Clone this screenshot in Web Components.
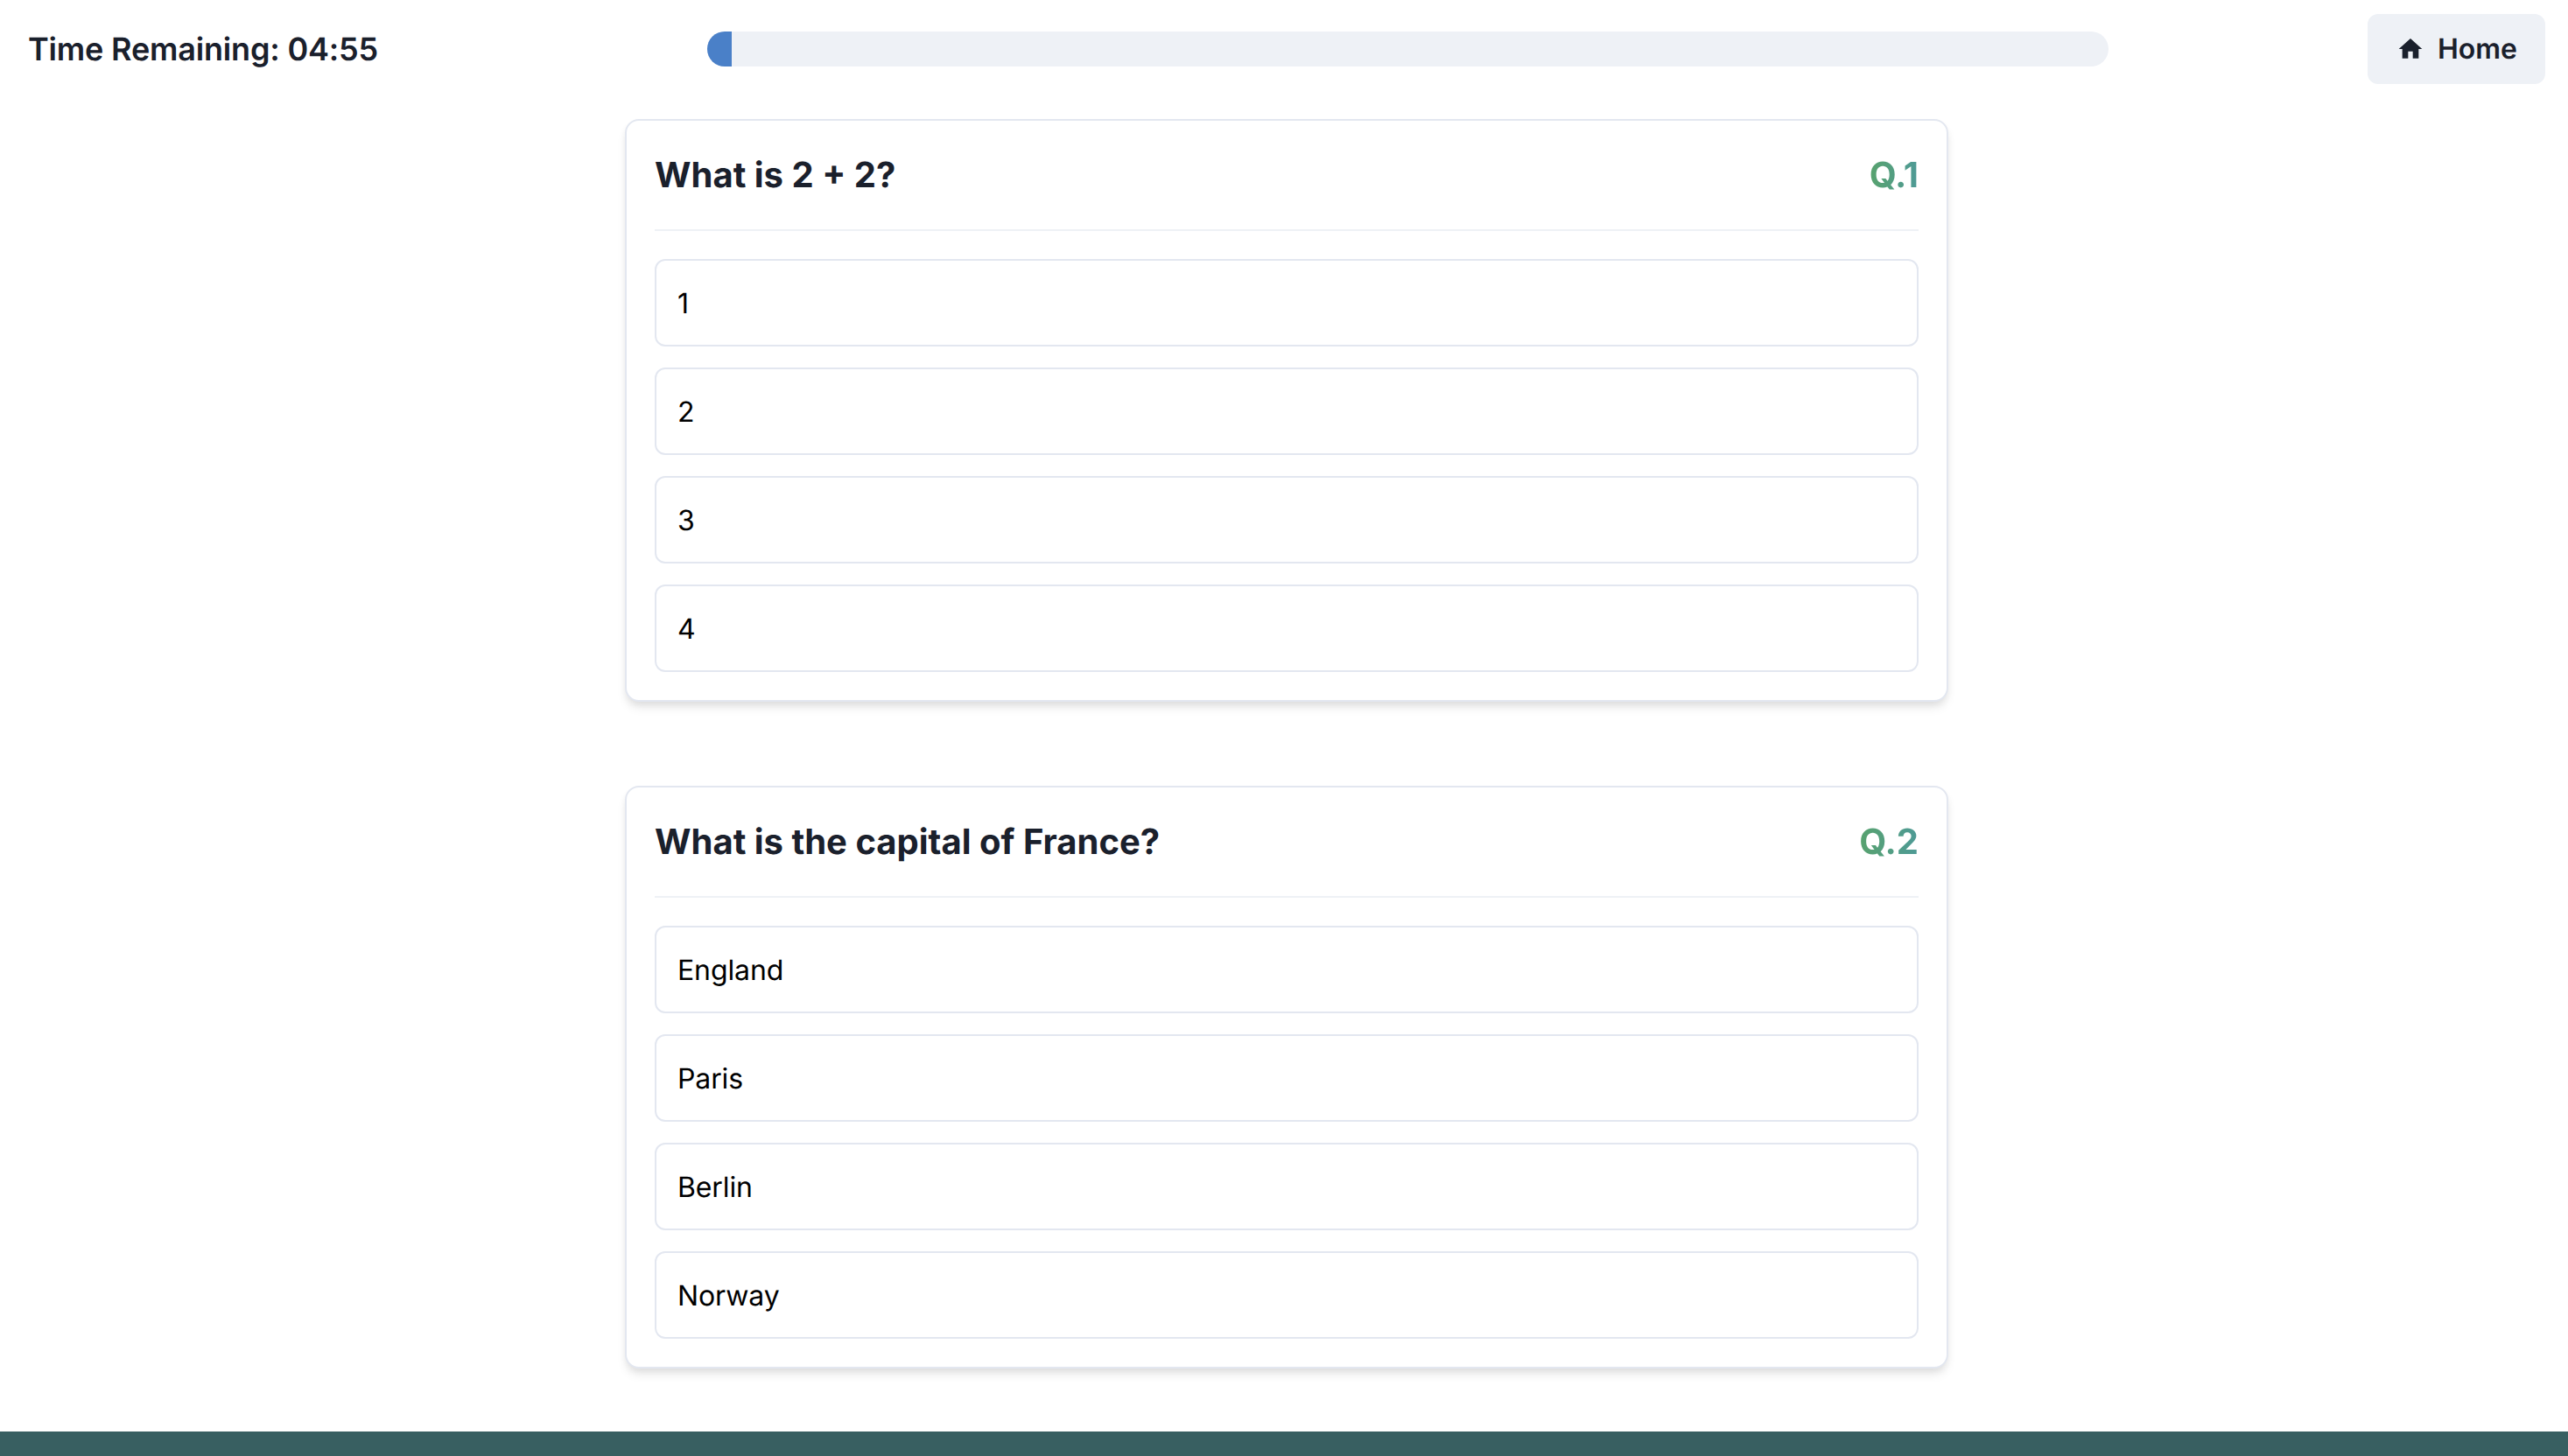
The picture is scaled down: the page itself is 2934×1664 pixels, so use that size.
<!DOCTYPE html>
<html lang="en">
<head>
<meta charset="utf-8">
<title>Quiz</title>
<style>
  html, body { margin: 0; height: 100%; background: #fff; }
  body {
    font-family: Inter, "Noto Sans", sans-serif;
    color: #1a202c;
    text-rendering: geometricPrecision;
  }
</style>
</head>
<body>
<quiz-page>
  <quiz-header slot="header" time="04:55" progress="28"></quiz-header>
  <quiz-card number="1" title="What is 2 + 2?">
    <quiz-option>1</quiz-option>
    <quiz-option>2</quiz-option>
    <quiz-option>3</quiz-option>
    <quiz-option>4</quiz-option>
  </quiz-card>
  <quiz-card number="2" title="What is the capital of France?">
    <quiz-option>England</quiz-option>
    <quiz-option>Paris</quiz-option>
    <quiz-option>Berlin</quiz-option>
    <quiz-option>Norway</quiz-option>
  </quiz-card>
</quiz-page>
<script>
class QuizPage extends HTMLElement {
  constructor() {
    super();
    this.attachShadow({ mode: "open" });
    this.shadowRoot.innerHTML = `
      <style>
        :host { display: flex; flex-direction: column; height: 1664px; overflow: hidden; }
        main {
          flex: 1;
          display: flex;
          flex-direction: column;
          align-items: center;
          gap: 96px;
          padding: 40px 0 0 6px;
        }
        footer { height: 28px; background: #385f61; }
      </style>
      <slot name="header"></slot>
      <main><slot></slot></main>
      <footer></footer>
    `;
  }
}

class QuizHeader extends HTMLElement {
  constructor() {
    super();
    this.attachShadow({ mode: "open" });
  }

  connectedCallback() {
    const time = this.getAttribute("time") || "00:00";
    const progress = this.getAttribute("progress") || "0";
    this.shadowRoot.innerHTML = `
      <style>
        :host {
          display: flex;
          align-items: center;
          height: 80px;
          padding: 16px 26px 0 32px;
        }
        .timer {
          width: 776px;
          flex: none;
          font-size: 36px;
          font-weight: 600;
          line-height: 54px;
          letter-spacing: -0.18px;
          color: #1a202c;
        }
        .track {
          width: 1601px;
          height: 40px;
          flex: none;
          border-radius: 20px;
          background: #eef1f6;
          overflow: hidden;
        }
        .fill { height: 100%; width: ${progress}px; background: #4a80c8; }
        button {
          display: flex;
          align-items: center;
          gap: 15px;
          height: 80px;
          margin-left: auto;
          padding: 0 32px;
          border: 0;
          border-radius: 12px;
          background: #eef1f6;
          color: #1a202c;
          font: 600 32px/48px Inter, "Noto Sans", sans-serif;
          text-rendering: geometricPrecision;
        }
        svg { width: 32px; height: 32px; margin-left: 1px; fill: currentColor; flex: none; }
      </style>
      <div class="timer">Time Remaining: ${time}</div>
      <div class="track"><div class="fill"></div></div>
      <button>
        <svg viewBox="0 0 24 24"><path d="M10 20v-6h4v6h5v-8h3L12 3 2 12h3v8z"/></svg>
        Home
      </button>
    `;
  }
}

class QuizCard extends HTMLElement {
  constructor() {
    super();
    this.attachShadow({ mode: "open" });
  }

  connectedCallback() {
    const title = this.getAttribute("title") || "";
    const number = this.getAttribute("number") || "";
    this.shadowRoot.innerHTML = `
      <style>
        :host {
          display: block;
          box-sizing: border-box;
          width: 1512px;
          padding: 32px;
          border: 2px solid #e3e7f0;
          border-radius: 16px;
          background: #fff;
          box-shadow: 0 8px 12px -2px rgba(0,0,0,0.1), 0 4px 8px -2px rgba(0,0,0,0.06);
        }
        header {
          display: flex;
          justify-content: space-between;
          align-items: center;
          padding-bottom: 32px;
          border-bottom: 2px solid #eef1f6;
          margin-bottom: 32px;
        }
        h2 {
          margin: 0;
          font-size: 40px;
          line-height: 60px;
          font-weight: 700;
          color: #1a202c;
        }
        .num {
          font-size: 40px;
          line-height: 60px;
          font-weight: 700;
          background: linear-gradient(to right, #58a26e, #4e9a96);
          -webkit-background-clip: text;
          background-clip: text;
          color: transparent;
        }
        .options { display: flex; flex-direction: column; gap: 24px; }
      </style>
      <header>
        <h2>${title}</h2>
        <span class="num">Q.${number}</span>
      </header>
      <div class="options"><slot></slot></div>
    `;
  }
}

class QuizOption extends HTMLElement {
  constructor() {
    super();
    this.attachShadow({ mode: "open" });
    this.shadowRoot.innerHTML = `
      <style>
        :host {
          display: block;
          box-sizing: border-box;
          height: 100px;
          padding: 25px 24px 23px;
          border: 2px solid #e3e7f0;
          border-radius: 12px;
          font-size: 32px;
          line-height: 48px;
          letter-spacing: -0.12px;
          color: #000;
        }
      </style>
      <slot></slot>
    `;
  }
}

customElements.define("quiz-page", QuizPage);
customElements.define("quiz-header", QuizHeader);
customElements.define("quiz-card", QuizCard);
customElements.define("quiz-option", QuizOption);
</script>
</body>
</html>
